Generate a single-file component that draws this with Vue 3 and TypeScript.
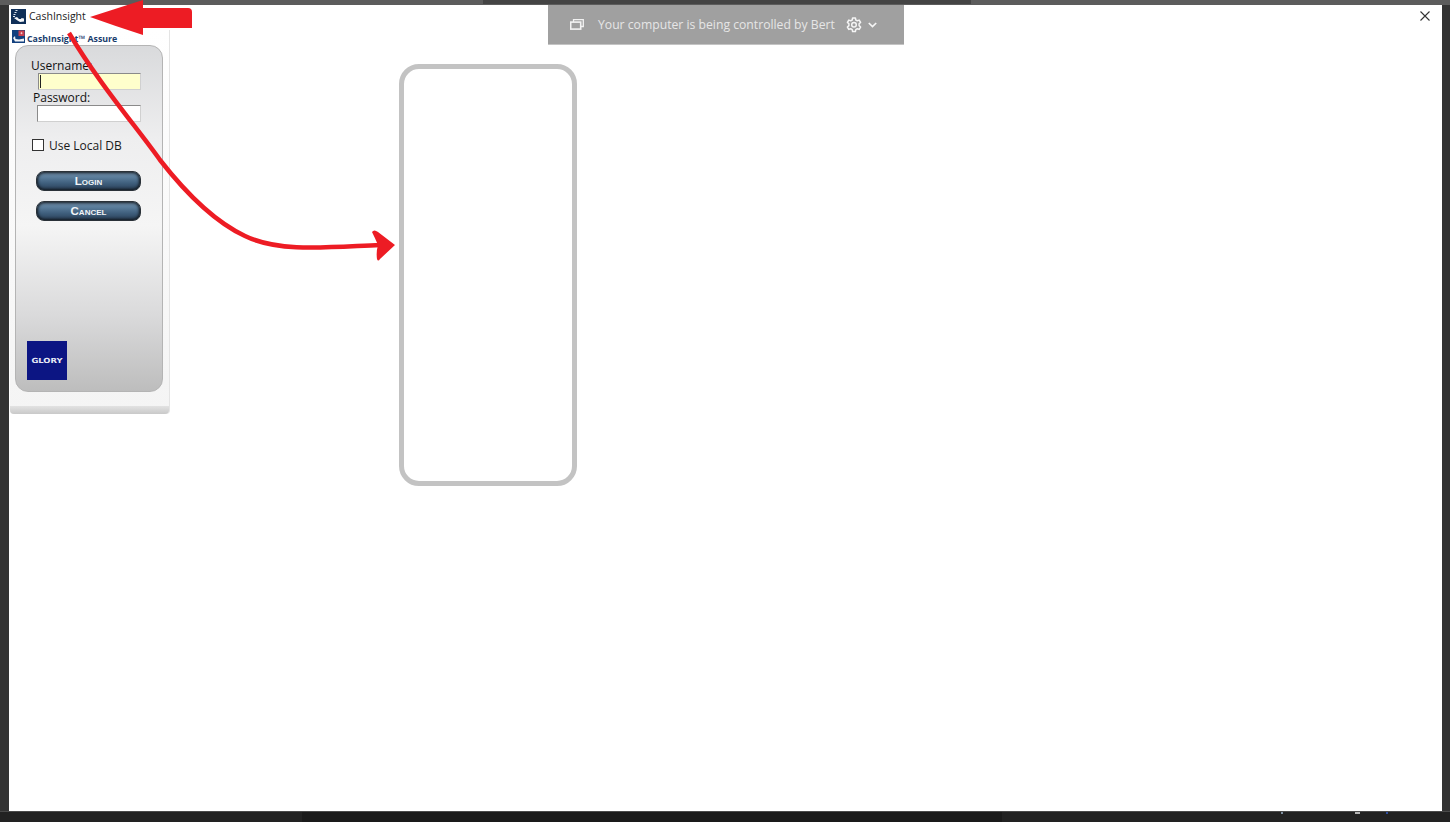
<script setup lang="ts">
const fields = [
  { id: 'username', label: 'Username:', active: true },
  { id: 'password', label: 'Password:', active: false },
]
const buttons = ['Login', 'Cancel']
const trayMarks = [
  { x: 1281, w: 2, c: '#7f8f9f' },
  { x: 1355, w: 5, c: '#b5b5b5' },
  { x: 1386, w: 2, c: '#2f4f9f' },
]
</script>

<template>
  <div class="screen">
    <div class="top-edge"><div class="top-notch"></div></div>

    <div class="middle">
      <div class="window">
        <div class="title-row">
          <svg class="app-icon" viewBox="0 0 15 15">
            <rect width="15" height="15" fill="#0f2f58" />
            <path d="M4.5 1.5 L6.5 1.5 M3.5 3.5 L5.5 3.5 M2.5 5.5 L4.5 5.5 M2 7.5 L4 7.5" stroke="#dfe7f0" stroke-width="1.1" />
            <path d="M3 9 L6 8 L8 10 L10 10 L10.5 9 L13 9.5 L13 12.5 L9 13 L6.5 11.5 Z" fill="#f4f6f8" />
          </svg>
          <span class="app-name">CashInsight</span>
        </div>

        <div class="login-shell">
          <div class="brand-row">
            <svg class="brand-icon" viewBox="0 0 13 13">
              <rect width="13" height="13" fill="#12407e" />
              <rect x="6.5" y="0.5" width="6" height="5.5" fill="#c9404f" />
              <path d="M8.5 3.2 H10.5 M9.5 2.2 V4.2" stroke="#f4d5d8" stroke-width="0.8" />
              <path d="M1 8 L3 6 L3.5 9 L7 9.5 L12 8.5 L12 11.5 L3 11.5 Z" fill="#f2f4f7" />
            </svg>
            <span class="brand-name">CashInsight™ Assure</span>
          </div>

          <div class="login-panel">
            <div v-for="f in fields" :key="f.id" class="field" :class="f.id">
              <label class="field-label">{{ f.label }}</label>
              <div class="field-input" :class="{ active: f.active }">
                <i v-if="f.active" class="caret"></i>
              </div>
            </div>

            <div class="local-db">
              <span class="checkbox"></span>
              <span>Use Local DB</span>
            </div>

            <div class="actions">
              <button v-for="b in buttons" :key="b" class="gel-btn" type="button">{{ b }}</button>
            </div>

            <div class="glory-logo"><span>GLORY</span></div>
          </div>

          <div class="shell-foot"></div>
        </div>

        <div class="placeholder-box"></div>

        <div class="control-banner">
          <svg class="restore-icon" width="14" height="11" viewBox="0 0 14 11" fill="none" stroke="#f2f2f2" stroke-width="1.3">
            <rect x="0.7" y="3.1" width="10" height="7" stroke-width="1.6" />
            <path d="M3.5 3 V0.7 H13.3 V7.5 H10.8" />
          </svg>
          <span class="banner-text">Your computer is being controlled by Bert</span>
          <svg class="gear-icon" width="16" height="16" viewBox="0 0 16 16" fill="none" stroke="#f5f5f5" stroke-width="1.5" stroke-linejoin="round">
            <path d="M6.6 1 H9.4 L9.8 3 L11.3 3.8 L13.2 3.1 L14.6 5.5 L13.1 6.8 V8.6 L14.6 10 L13.2 12.4 L11.3 11.7 L9.8 12.6 L9.4 14.6 H6.6 L6.2 12.6 L4.7 11.7 L2.8 12.4 L1.4 10 L2.9 8.6 V6.8 L1.4 5.5 L2.8 3.1 L4.7 3.8 L6.2 3 Z" />
            <circle cx="8" cy="7.8" r="2.3" />
          </svg>
          <svg class="chevron-icon" width="9" height="6" viewBox="0 0 9 6" fill="none" stroke="#f5f5f5" stroke-width="1.7">
            <path d="M0.8 1 L4.5 4.6 L8.2 1" />
          </svg>
        </div>

        <svg class="close-icon" width="10" height="10" viewBox="0 0 10 10" stroke="#333" stroke-width="1.1">
          <path d="M0.5 0.5 L9.5 9.5 M9.5 0.5 L0.5 9.5" />
        </svg>
      </div>
      <div class="right-edge"></div>
    </div>

    <div class="taskbar">
      <div class="taskbar-dark"></div>
      <i
        v-for="m in trayMarks"
        :key="m.x"
        class="tray-mark"
        :style="{ left: m.x + 'px', width: m.w + 'px', background: m.c }"
      ></i>
    </div>

    <!-- red annotations drawn on the screenshot -->
    <svg class="annotations" width="1450" height="822" viewBox="0 0 1450 822">
      <path d="M90 17 L143 0 V8 H188 Q192 8 192 12 V28 H143 V35 Q115 26 90 17 Z" fill="#ed1c24" />
      <path
        d="M69 33 C100 85 135 125 160 160 C185 192 215 222 245 236 C280 253 330 247 380 245"
        fill="none"
        stroke="#ed1c24"
        stroke-width="4.5"
      />
      <path d="M372 232 Q374 229 378 232 L395 245 L380 259 Q378 262 377 259 Q376 252 378 245 Q375 238 372 232 Z" fill="#ed1c24" />
    </svg>
  </div>
</template>

<style>
html,
body {
  margin: 0;
  background: #333;
  overflow: hidden;
}
</style>

<style scoped>
.screen {
  position: relative;
  width: 1450px;
  height: 822px;
  display: flex;
  flex-direction: column;
  background: #333;
  font-family: 'Open Sans', 'Liberation Sans', sans-serif;
  color: #111;
}

.top-edge {
  height: 5px;
  background: #5c5c5c;
  display: flex;
  justify-content: center;
}

.top-notch {
  width: 488px;
  height: 4px;
  margin-left: 4px;
  background: #444;
}

.middle {
  flex: 1;
  min-height: 0;
  display: flex;
  padding-left: 9px;
}

.window {
  position: relative;
  width: 1433px;
  background: #fff;
}

.right-edge {
  flex: 1;
  background: #333;
}

.taskbar {
  position: relative;
  height: 10px;
  border-top: 1px solid #4a4a4a;
  background: #222;
  display: flex;
  padding-left: 302px;
}

.taskbar-dark {
  width: 700px;
  background: #1a1a1a;
}

.tray-mark {
  position: absolute;
  top: 0;
  height: 2px;
}

.title-row {
  height: 25px;
  display: flex;
  align-items: center;
  gap: 3px;
  padding-left: 2px;
}

.app-icon {
  width: 15px;
  height: 15px;
  margin-top: -2px;
}

.app-name {
  font-size: 10.5px;
  color: #1c1c1c;
  margin-top: -4px;
}

.login-shell {
  width: 160px;
  margin-left: 1px;
  height: 384px;
  display: flex;
  flex-direction: column;
  background: linear-gradient(#ffffff, #f4f4f4);
  border-right: 1px solid #e4e4e4;
  box-sizing: border-box;
  border-radius: 0 0 4px 4px;
}

.brand-row {
  height: 15px;
  display: flex;
  align-items: center;
  gap: 2px;
  padding-left: 2px;
}

.brand-icon {
  width: 13px;
  height: 13px;
  margin-top: -3px;
}

.brand-name {
  font-size: 8.8px;
  font-weight: 700;
  color: #1a3d6d;
  white-space: nowrap;
  margin-top: 3px;
}

.login-panel {
  position: relative;
  box-sizing: border-box;
  width: 148px;
  height: 347px;
  margin-left: 5px;
  padding-top: 13px;
  background: linear-gradient(#d9dadc 0%, #eeeeef 27%, #f5f5f5 52%, #dadadb 78%, #bdbdbd 100%);
  border: 1.5px solid #b4b4b4;
  border-radius: 13px;
}

.field {
  display: flex;
  flex-direction: column;
}

.field-label {
  font-size: 12px;
  line-height: 14px;
  margin-left: 15px;
}

.field.password .field-label {
  margin-left: 17px;
}

.field-input {
  box-sizing: border-box;
  width: 103px;
  height: 17px;
  margin-left: 21px;
  background: #fff;
  border: 1px solid #8a8a8a;
  border-right-color: #d0d0d0;
  border-bottom-color: #d0d0d0;
  padding: 1px 0 0 1px;
}

.field-input.active {
  margin-left: 21.5px;
  width: 103px;
  background: #ffffcc;
  margin-bottom: 1px;
}

.field.password .field-input {
  width: 104px;
}

.caret {
  display: block;
  width: 1px;
  height: 13px;
  background: #222;
}

.local-db {
  display: flex;
  align-items: center;
  gap: 5px;
  margin: 17px 0 0 16px;
  font-size: 12px;
  line-height: 14px;
  color: #1a1a1a;
}

.checkbox {
  box-sizing: border-box;
  width: 12px;
  height: 12px;
  margin-top: -3px;
  background: #fff;
  border: 1px solid #333;
}

.actions {
  display: flex;
  flex-direction: column;
  gap: 10px;
  margin: 18px 0 0 20px;
}

.gel-btn {
  width: 105px;
  height: 20px;
  padding: 0;
  border: 1px solid #2a3138;
  border-radius: 8px;
  background: linear-gradient(#6f8ca6 0%, #5a7c9a 30%, #3f5f7d 62%, #2a4057 100%);
  box-shadow: inset 0 0 3px 1px #11181f;
  color: #f1f4f7;
  font-family: 'Liberation Sans', Arial, sans-serif;
  font-size: 11.5px;
  font-weight: 700;
  font-variant: small-caps;
  line-height: 14px;
}

.glory-logo {
  position: absolute;
  left: 10.5px;
  bottom: 11.5px;
  width: 40px;
  height: 39px;
  background: #0c1583;
  display: flex;
  align-items: center;
  justify-content: center;
}

.glory-logo span {
  margin-top: 2px;
  font-family: 'DejaVu Sans', sans-serif;
  font-size: 7px;
  font-weight: 700;
  color: #e8eaf6;
  transform: scaleX(1.2);
}

.shell-foot {
  margin-top: auto;
  height: 8px;
  background: linear-gradient(#e2e2e2, #c9c9c9);
  border-radius: 0 0 4px 4px;
}

.placeholder-box {
  position: absolute;
  left: 390px;
  top: 59px;
  box-sizing: border-box;
  width: 178px;
  height: 422px;
  border: 5px solid #c3c3c3;
  border-radius: 20px;
}

.control-banner {
  position: absolute;
  left: 539px;
  top: 0;
  box-sizing: border-box;
  width: 356px;
  height: 40px;
  display: flex;
  align-items: center;
  padding-left: 22px;
  background: #a0a0a0;
  border-bottom: 1px solid #c4c4c4;
}

.banner-text {
  margin-left: 14px;
  font-size: 12.2px;
  color: #e6e6e6;
  white-space: nowrap;
}

.gear-icon {
  margin-left: 11px;
}

.chevron-icon {
  margin-left: 6px;
}

.close-icon {
  position: absolute;
  right: 12px;
  top: 6px;
}

.annotations {
  position: absolute;
  left: 0;
  top: 0;
  pointer-events: none;
}
</style>
